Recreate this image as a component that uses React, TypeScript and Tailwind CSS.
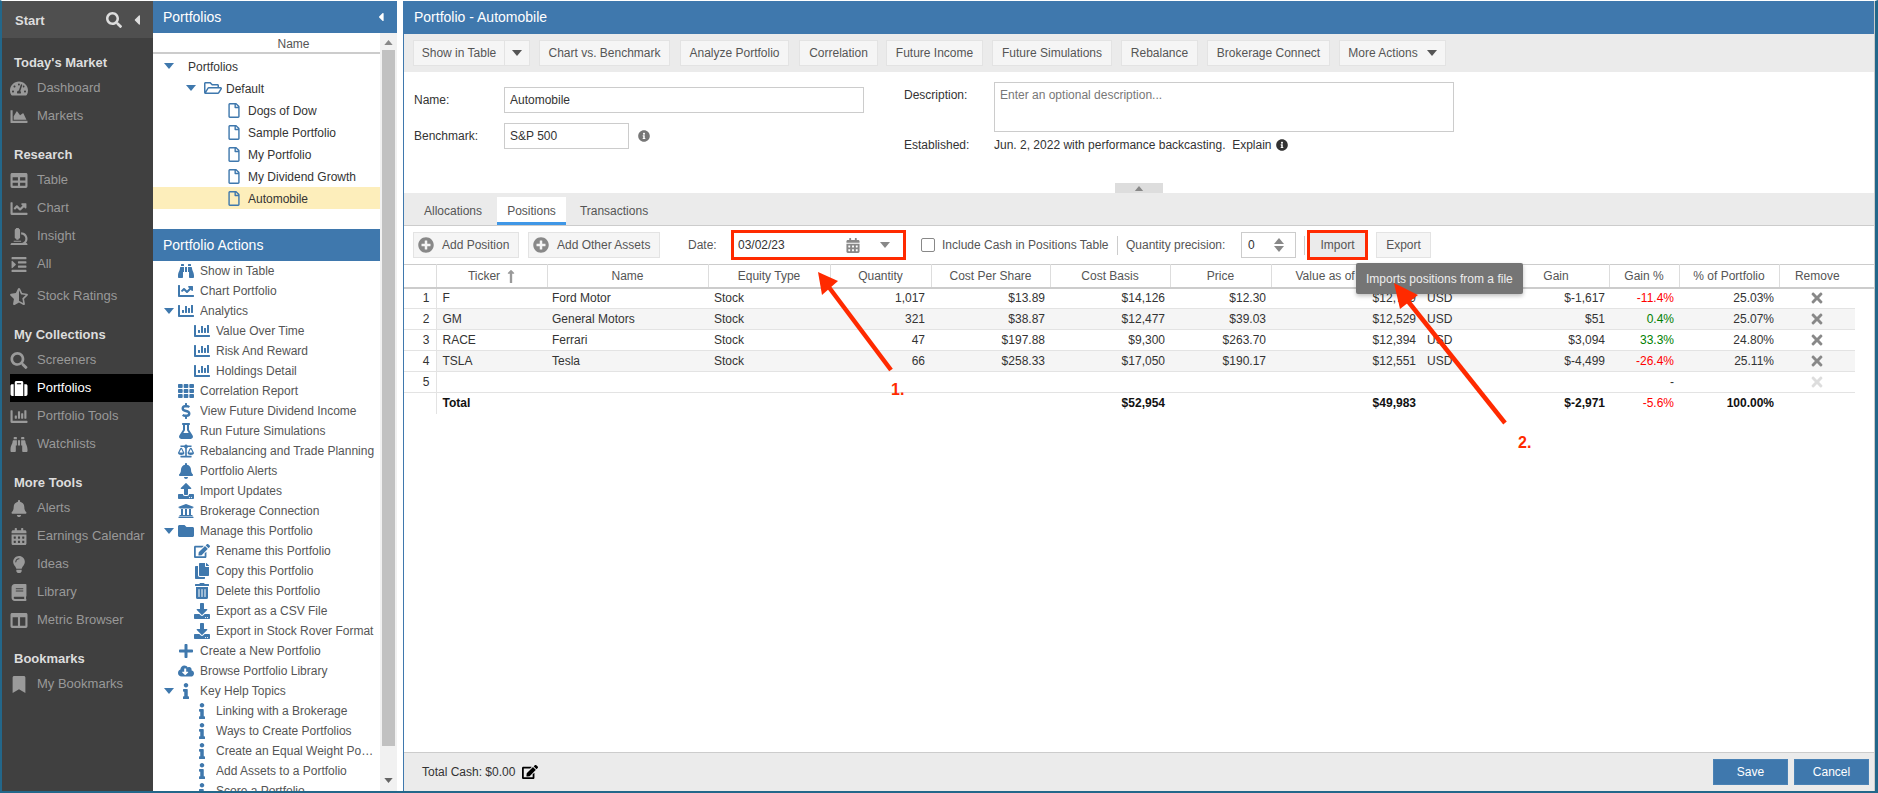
import React from "react";
import {
  FaBalanceScale,
  FaBell,
  FaBinoculars,
  FaBook,
  FaBookmark,
  FaCalendarAlt,
  FaCaretLeft,
  FaChartArea,
  FaChartBar,
  FaChartLine,
  FaCloudDownloadAlt,
  FaColumns,
  FaCopy,
  FaDollarSign,
  FaDownload,
  FaEdit,
  FaFlask,
  FaFolder,
  FaIndent,
  FaInfo,
  FaInfoCircle,
  FaLightbulb,
  FaLongArrowAltUp,
  FaMicroscope,
  FaPlus,
  FaPlusCircle,
  FaRegFile,
  FaRegFolderOpen,
  FaSearch,
  FaStarHalfAlt,
  FaSuitcase,
  FaTable,
  FaTachometerAlt,
  FaTh,
  FaTimes,
  FaTrashAlt,
  FaUniversity,
  FaUpload,
} from "react-icons/fa";

const nav = [
  {
    title: "Today's Market",
    items: [
      { label: "Dashboard", icon: FaTachometerAlt },
      { label: "Markets", icon: FaChartArea },
    ],
  },
  {
    title: "Research",
    items: [
      { label: "Table", icon: FaTable },
      { label: "Chart", icon: FaChartLine },
      { label: "Insight", icon: FaMicroscope },
      { label: "All", icon: FaIndent },
      { label: "Stock Ratings", icon: FaStarHalfAlt, spaced: true },
    ],
  },
  {
    title: "My Collections",
    items: [
      { label: "Screeners", icon: FaSearch },
      { label: "Portfolios", icon: FaSuitcase, active: true },
      { label: "Portfolio Tools", icon: FaChartBar },
      { label: "Watchlists", icon: FaBinoculars },
    ],
  },
  {
    title: "More Tools",
    items: [
      { label: "Alerts", icon: FaBell },
      { label: "Earnings Calendar", icon: FaCalendarAlt },
      { label: "Ideas", icon: FaLightbulb },
      { label: "Library", icon: FaBook },
      { label: "Metric Browser", icon: FaColumns },
    ],
  },
  {
    title: "Bookmarks",
    items: [{ label: "My Bookmarks", icon: FaBookmark }],
  },
];

const actions = [
  { label: "Show in Table", icon: FaBinoculars },
  { label: "Chart Portfolio", icon: FaChartLine },
  { label: "Analytics", icon: FaChartBar, open: true },
  { label: "Value Over Time", icon: FaChartBar, child: true },
  { label: "Risk And Reward", icon: FaChartBar, child: true },
  { label: "Holdings Detail", icon: FaChartBar, child: true },
  { label: "Correlation Report", icon: FaTh },
  { label: "View Future Dividend Income", icon: FaDollarSign },
  { label: "Run Future Simulations", icon: FaFlask },
  { label: "Rebalancing and Trade Planning", icon: FaBalanceScale },
  { label: "Portfolio Alerts", icon: FaBell },
  { label: "Import Updates", icon: FaUpload },
  { label: "Brokerage Connection", icon: FaUniversity },
  { label: "Manage this Portfolio", icon: FaFolder, open: true },
  { label: "Rename this Portfolio", icon: FaEdit, child: true },
  { label: "Copy this Portfolio", icon: FaCopy, child: true },
  { label: "Delete this Portfolio", icon: FaTrashAlt, child: true },
  { label: "Export as a CSV File", icon: FaDownload, child: true },
  { label: "Export in Stock Rover Format", icon: FaDownload, child: true },
  { label: "Create a New Portfolio", icon: FaPlus },
  { label: "Browse Portfolio Library", icon: FaCloudDownloadAlt },
  { label: "Key Help Topics", icon: FaInfo, open: true },
  { label: "Linking with a Brokerage", icon: FaInfo, child: true },
  { label: "Ways to Create Portfolios", icon: FaInfo, child: true },
  { label: "Create an Equal Weight Portfolio", icon: FaInfo, child: true },
  { label: "Add Assets to a Portfolio", icon: FaInfo, child: true },
  { label: "Score a Portfolio", icon: FaInfo, child: true },
];

const positions = [
  { n: 1, ticker: "F", name: "Ford Motor", qty: "1,017", cps: "$13.89", basis: "$14,126", price: "$12.30", value: "$12,729", gain: "$-1,617", pct: "-11.4%", up: false, share: "25.03%" },
  { n: 2, ticker: "GM", name: "General Motors", qty: "321", cps: "$38.87", basis: "$12,477", price: "$39.03", value: "$12,529", gain: "$51", pct: "0.4%", up: true, share: "25.07%" },
  { n: 3, ticker: "RACE", name: "Ferrari", qty: "47", cps: "$197.88", basis: "$9,300", price: "$263.70", value: "$12,394", gain: "$3,094", pct: "33.3%", up: true, share: "24.80%" },
  { n: 4, ticker: "TSLA", name: "Tesla", qty: "66", cps: "$258.33", basis: "$17,050", price: "$190.17", value: "$12,551", gain: "$-4,499", pct: "-26.4%", up: false, share: "25.11%" },
];

const colWidths = [32, 111, 161, 122, 101, 119, 120, 101, 150, 82, 106, 70, 100, 76, 19];

const Caret = ({ className }: { className: string }) => (
  <svg viewBox="0 0 10 6" className={className} fill="currentColor">
    <path d="M0 0h10L5 6z" />
  </svg>
);

const Sidebar = () => (
  <div className="flex h-full w-[151px] shrink-0 flex-col bg-[#404040]">
    <div className="flex h-[37px] shrink-0 items-center bg-[#4f4f4f] pl-[13px] text-[13px] font-bold text-[#ddd]">
      <span className="pt-[2px]">Start</span>
      <FaSearch className="ml-[61px] h-[16px] w-[16px] text-[#ddd]" />
      <FaCaretLeft className="ml-[10px] h-[16px] w-[10px] text-[#ddd]" />
    </div>
    {nav.map((section) => (
      <div key={section.title} className="mt-[14px]">
        <div className="flex h-[22px] items-center pl-[12px] text-[13px] font-bold text-[#ddd]">{section.title}</div>
        {section.items.map((item: any) => (
          <div
            key={item.label}
            className={`flex h-[28px] items-center text-[13px] ${item.active ? "ml-[8px] bg-black text-white" : "pl-[8px] text-[#999]"} ${item.spaced ? "mt-[4px]" : ""}`}
          >
            <item.icon className={`h-[17px] w-[18px] shrink-0 ${item.active ? "text-white" : "text-[#9a9a9a]"}`} />
            <span className="ml-[9px] whitespace-nowrap">{item.label}</span>
          </div>
        ))}
      </div>
    ))}
  </div>
);

const TreeRow = ({ level, label, selected }: { level: number; label: string; selected?: boolean }) => (
  <div className={`flex h-[22px] items-center text-[12px] text-[#333] ${selected ? "bg-[#fdeebb]" : ""}`}>
    {level === 0 && (
      <>
        <Caret className="ml-[11px] h-[6px] w-[10px] text-[#3f78ad]" />
        <span className="ml-[14px] pt-[2px]">{label}</span>
      </>
    )}
    {level === 1 && (
      <>
        <Caret className="ml-[33px] h-[6px] w-[10px] text-[#3f78ad]" />
        <FaRegFolderOpen className="ml-[8px] h-[16px] w-[18px] text-[#3f78ad]" />
        <span className="ml-[4px] pt-[2px]">{label}</span>
      </>
    )}
    {level === 2 && (
      <>
        <FaRegFile className="ml-[75px] h-[15px] w-[12px] text-[#3f78ad]" />
        <span className="ml-[8px] pt-[2px]">{label}</span>
      </>
    )}
  </div>
);

const PortfolioPanel = () => (
  <div className="flex h-full w-[244px] shrink-0 flex-col bg-white">
    <div className="flex h-[32px] shrink-0 items-center justify-between bg-[#3f78ad] pl-[10px] pr-[11px] text-[14px] text-white">
      <span>Portfolios</span>
      <FaCaretLeft className="h-[14px] w-[10px] text-white" />
    </div>
    <div className="flex min-h-0 flex-1">
      <div className="flex w-[227px] flex-col overflow-hidden">
        <div className="h-[21px] shrink-0 border-b-2 border-[#ccc] pl-[54px] pt-[2px] text-center text-[12px] text-[#555]">Name</div>
        <div className="shrink-0 pt-px">
          <TreeRow level={0} label="Portfolios" />
          <TreeRow level={1} label="Default" />
          <TreeRow level={2} label="Dogs of Dow" />
          <TreeRow level={2} label="Sample Portfolio" />
          <TreeRow level={2} label="My Portfolio" />
          <TreeRow level={2} label="My Dividend Growth" />
          <TreeRow level={2} label="Automobile" selected />
        </div>
        <div className="mt-[20px] flex h-[32px] shrink-0 items-center bg-[#3f78ad] pl-[10px] text-[14px] text-white">Portfolio Actions</div>
        {actions.map((a) => (
          <div key={a.label} className="flex h-[20px] shrink-0 items-center text-[12px] text-[#555]">
            {a.open ? <Caret className="ml-[11px] h-[6px] w-[10px] shrink-0 text-[#3f78ad]" /> : <span className="w-[21px] shrink-0" />}
            <a.icon className={`h-[16px] w-[16px] shrink-0 text-[#3f78ad] ${a.child ? "ml-[20px]" : "ml-[4px]"}`} />
            <span className="ml-[6px] truncate pr-[5px]">{a.label}</span>
          </div>
        ))}
      </div>
      <div className="flex w-[17px] flex-col items-center bg-[#f1f1f1] pt-[7px]">
        <Caret className="h-[5px] w-[9px] rotate-180 text-[#888]" />
        <div className="mt-[5px] h-[696px] w-[13px] bg-[#c1c1c1]" />
        <Caret className="mt-[32px] h-[5px] w-[9px] text-[#666]" />
      </div>
    </div>
  </div>
);

const ToolButton = ({ className, children }: { className: string; children: React.ReactNode }) => (
  <div className={`flex h-[26px] shrink-0 items-center justify-center whitespace-nowrap border border-[#e3e3e3] bg-[#f5f5f5] text-[12px] text-[#555] ${className}`}>
    {children}
  </div>
);

const TopToolbar = () => (
  <div className="flex h-[38px] shrink-0 items-center bg-[#ebebeb] pl-[9px]">
    <ToolButton className="w-[92px]">Show in Table</ToolButton>
    <ToolButton className="w-[25px] border-l-0">
      <Caret className="h-[6px] w-[10px] text-[#555]" />
    </ToolButton>
    <ToolButton className="ml-[9px] w-[131px]">Chart vs. Benchmark</ToolButton>
    <ToolButton className="ml-[10px] w-[109px]">Analyze Portfolio</ToolButton>
    <ToolButton className="ml-[10px] w-[79px]">Correlation</ToolButton>
    <ToolButton className="ml-[8px] w-[97px]">Future Income</ToolButton>
    <ToolButton className="ml-[9px] w-[120px]">Future Simulations</ToolButton>
    <ToolButton className="ml-[9px] w-[77px]">Rebalance</ToolButton>
    <ToolButton className="ml-[9px] w-[123px]">Brokerage Connect</ToolButton>
    <ToolButton className="ml-[9px] w-[107px]">
      More Actions
      <Caret className="ml-[9px] h-[6px] w-[10px] text-[#555]" />
    </ToolButton>
  </div>
);

const PortfolioForm = () => (
  <div className="flex h-[121px] shrink-0 flex-col bg-white text-[12px] text-[#333]">
    <div className="flex flex-1">
      <div className="flex w-[500px] shrink-0 flex-col gap-[10px] pl-[10px] pt-[15px]">
        <div className="flex items-center">
          <span className="w-[90px]">Name:</span>
          <div className="flex h-[26px] w-[360px] items-center border border-[#ccc] px-[5px]">Automobile</div>
        </div>
        <div className="flex items-center">
          <span className="w-[90px]">Benchmark:</span>
          <div className="flex h-[26px] w-[125px] items-center border border-[#ccc] px-[5px]">S&amp;P 500</div>
          <FaInfoCircle className="ml-[9px] h-[12px] w-[12px] text-[#777]" />
        </div>
      </div>
      <div className="flex flex-col pt-[10px]">
        <div className="flex">
          <span className="w-[90px] pt-[4px]">Description:</span>
          <div className="h-[50px] w-[460px] border border-[#ccc] px-[5px] pt-[3px] text-[#777]">Enter an optional description...</div>
        </div>
        <div className="mt-[6px] flex h-[14px] items-center">
          <span className="w-[90px]">Established:</span>
          <span className="whitespace-pre">Jun. 2, 2022 with performance backcasting.  Explain</span>
          <FaInfoCircle className="ml-[4px] h-[12px] w-[12px] text-[#333]" />
        </div>
      </div>
    </div>
    <div className="flex justify-center">
      <div className="flex h-[10px] w-[48px] items-center justify-center bg-[#ddd]">
        <Caret className="h-[5px] w-[10px] rotate-180 text-[#888]" />
      </div>
    </div>
  </div>
);

const Tabs = () => (
  <div className="flex h-[33px] shrink-0 items-end border-b border-[#ccc] bg-[#ebebeb] text-[12px] text-[#555]">
    <div className="flex h-[28px] w-[93px] items-center justify-center pl-[5px]">Allocations</div>
    <div className="flex h-[28px] w-[69px] items-center justify-center border-b-[3px] border-[#3f97e6] bg-white pt-[2px]">Positions</div>
    <div className="flex h-[28px] w-[96px] items-center justify-center">Transactions</div>
  </div>
);

const PositionsToolbar = () => (
  <div className="flex h-[38px] shrink-0 items-center pl-[9px] text-[12px] text-[#555]">
    <ToolButton className="w-[106px] justify-start pl-[4px]">
      <FaPlusCircle className="mr-[8px] h-[16px] w-[16px] text-[#888]" />
      Add Position
    </ToolButton>
    <ToolButton className="ml-[9px] w-[132px] justify-start pl-[4px]">
      <FaPlusCircle className="mr-[8px] h-[16px] w-[16px] text-[#888]" />
      Add Other Assets
    </ToolButton>
    <span className="ml-[28px] w-[43px]">Date:</span>
    <div className="flex h-[30px] w-[175px] shrink-0 items-center border-[3px] border-[#ff2a00] bg-white pl-[4px] text-[#333]">
      <span>03/02/23</span>
      <FaCalendarAlt className="ml-[61px] h-[15px] w-[14px] text-[#888]" />
      <Caret className="ml-[20px] h-[6px] w-[10px] text-[#888]" />
    </div>
    <div className="ml-[15px] h-[14px] w-[14px] shrink-0 rounded-[2px] border border-[#888] bg-white" />
    <span className="ml-[7px] w-[166px] shrink-0 whitespace-nowrap">Include Cash in Positions Table</span>
    <div className="ml-[9px] h-[19px] w-px shrink-0 bg-[#ccc]" />
    <span className="ml-[8px] w-[99px] shrink-0 whitespace-nowrap">Quantity precision:</span>
    <div className="ml-[16px] flex h-[26px] w-[55px] shrink-0 items-center justify-between border border-[#ccc] pl-[6px] pr-[11px] text-[#333]">
      <span>0</span>
      <div className="flex flex-col gap-[2px]">
        <Caret className="h-[6px] w-[10px] rotate-180 text-[#888]" />
        <Caret className="h-[6px] w-[10px] text-[#888]" />
      </div>
    </div>
    <div className="ml-[8px] h-[19px] w-px shrink-0 bg-[#ccc]" />
    <div className="ml-[2px] flex h-[30px] w-[61px] shrink-0 items-center justify-center border-[3px] border-[#ff2a00] bg-[#ebebeb]">Import</div>
    <ToolButton className="ml-[8px] w-[55px]">Export</ToolButton>
  </div>
);

const Th = ({ className = "", children }: { className?: string; children?: React.ReactNode }) => (
  <th className={`overflow-hidden whitespace-nowrap border-r border-[#ddd] p-0 text-center font-normal text-[#555] ${className}`}>{children}</th>
);

const PositionsTable = () => (
  <table className="w-[1470px] table-fixed border-collapse text-[12px] text-[#333]">
    <colgroup>
      {colWidths.map((w, i) => (
        <col key={i} style={{ width: w }} />
      ))}
    </colgroup>
    <thead>
      <tr className="h-[23px] border-y border-b-2 border-[#ccc]">
        <Th />
        <Th>
          Ticker
          <FaLongArrowAltUp className="ml-[7px] inline h-[15px] w-[8px] text-[#999]" />
        </Th>
        <Th>Name</Th>
        <Th>Equity Type</Th>
        <Th>Quantity</Th>
        <Th>Cost Per Share</Th>
        <Th>Cost Basis</Th>
        <Th>Price</Th>
        <Th className="pl-[24px] text-left">Value as of</Th>
        <Th />
        <Th>Gain</Th>
        <Th>Gain %</Th>
        <Th>% of Portfolio</Th>
        <Th className="border-r-0">Remove</Th>
        <th className="p-0" />
      </tr>
    </thead>
    <tbody>
      {positions.map((p) => (
        <tr key={p.n} className={`h-[21px] ${p.n % 2 === 0 ? "bg-[#f5f5f5]" : ""}`}>
          <td className="border-b border-r border-[#e3e3e3] bg-white pr-[6px] text-right">{p.n}</td>
          <td className="border-b border-[#e3e3e3] pl-[6px]">{p.ticker}</td>
          <td className="border-b border-[#e3e3e3] pl-[5px]">{p.name}</td>
          <td className="border-b border-[#e3e3e3] pl-[6px]">Stock</td>
          <td className="border-b border-[#e3e3e3] pr-[6px] text-right">{p.qty}</td>
          <td className="border-b border-[#e3e3e3] pr-[5px] text-right">{p.cps}</td>
          <td className="border-b border-[#e3e3e3] pr-[5px] text-right">{p.basis}</td>
          <td className="border-b border-[#e3e3e3] pr-[5px] text-right">{p.price}</td>
          <td className="border-b border-[#e3e3e3] pr-[5px] text-right">{p.value}</td>
          <td className="border-b border-[#e3e3e3] pl-[6px]">USD</td>
          <td className="border-b border-[#e3e3e3] pr-[4px] text-right">{p.gain}</td>
          <td className={`border-b border-[#e3e3e3] pr-[5px] text-right ${p.up ? "text-[#008000]" : "text-[#f00]"}`}>{p.pct}</td>
          <td className="border-b border-[#e3e3e3] pr-[5px] text-right">{p.share}</td>
          <td className="border-b border-[#e3e3e3]">
            <FaTimes className="mx-auto h-[16px] w-[14px] text-[#888]" />
          </td>
          <td className="bg-white" />
        </tr>
      ))}
      <tr className="h-[21px]">
        <td className="border-b border-r border-[#e3e3e3] pr-[6px] text-right">5</td>
        <td colSpan={10} className="border-b border-[#e3e3e3]" />
        <td className="border-b border-[#e3e3e3] pr-[5px] text-right">-</td>
        <td className="border-b border-[#e3e3e3]" />
        <td className="border-b border-[#e3e3e3]">
          <FaTimes className="mx-auto h-[16px] w-[14px] text-[#ddd]" />
        </td>
        <td />
      </tr>
      <tr className="h-[21px] font-bold text-[#111]">
        <td className="border-r border-[#e3e3e3]" />
        <td className="pl-[6px]">Total</td>
        <td colSpan={4} />
        <td className="pr-[5px] text-right">$52,954</td>
        <td />
        <td className="pr-[5px] text-right">$49,983</td>
        <td />
        <td className="pr-[4px] text-right">$-2,971</td>
        <td className="pr-[5px] text-right font-normal text-[#f00]">-5.6%</td>
        <td className="pr-[5px] text-right">100.00%</td>
        <td />
        <td />
      </tr>
    </tbody>
  </table>
);

const Annotations = () => (
  <>
    <div className="absolute left-[1356px] top-[263px] flex h-[31px] w-[167px] items-center rounded-[2px] bg-[#757575] pl-[10px] text-[12px] text-[#eee] shadow-[0_2px_4px_rgba(0,0,0,0.25)]">
      Imports positions from a file
    </div>
    <svg className="pointer-events-none absolute left-0 top-0 h-[793px] w-[1878px]" viewBox="0 0 1878 793">
      <line x1="891" y1="370" x2="828" y2="286" stroke="#ff2a00" strokeWidth="4.5" />
      <polygon points="818,272 838,281 822,295" fill="#ff2a00" />
      <line x1="1505" y1="423" x2="1407" y2="300" stroke="#ff2a00" strokeWidth="4.5" />
      <polygon points="1394,283 1418,295 1400,309" fill="#ff2a00" />
    </svg>
    <span className="absolute left-[891px] top-[378px] text-[16px] font-bold text-[#ff2a00]">1.</span>
    <span className="absolute left-[1518px] top-[431px] text-[16px] font-bold text-[#ff2a00]">2.</span>
  </>
);

const PortfolioDetail = () => (
  <div className="flex h-full min-w-0 flex-1 flex-col border-x border-l-[#3f78ad] border-r-[#ccc] bg-white">
    <div className="flex h-[33px] shrink-0 items-center bg-[#3f78ad] pl-[10px] text-[14px] text-white">Portfolio - Automobile</div>
    <TopToolbar />
    <PortfolioForm />
    <Tabs />
    <PositionsToolbar />
    <PositionsTable />
    <div className="mt-auto flex h-[39px] shrink-0 items-center border-t border-[#ccc] bg-[#ebebeb] pl-[18px] pr-[5px] text-[12px] text-[#333]">
      <span>Total Cash: $0.00</span>
      <FaEdit className="ml-[7px] h-[16px] w-[16px] text-black" />
      <div className="ml-auto flex h-[26px] w-[75px] items-center justify-center border border-[#4a82b5] bg-[#3f78ad] text-white">Save</div>
      <div className="ml-[6px] flex h-[26px] w-[75px] items-center justify-center border border-[#4a82b5] bg-[#3f78ad] text-white">Cancel</div>
    </div>
  </div>
);

export default function App() {
  return (
    <div className="relative h-[793px] w-[1878px] overflow-hidden bg-white font-['Liberation_Sans',Arial,sans-serif]">
      <div className="flex h-full flex-col border-b-2 border-l-2 border-r-[3px] border-t border-[#23678a] border-t-white">
        <div className="flex min-h-0 flex-1">
          <Sidebar />
          <PortfolioPanel />
          <div className="w-[6px] shrink-0 bg-white" />
          <PortfolioDetail />
        </div>
      </div>
      <Annotations />
    </div>
  );
}
